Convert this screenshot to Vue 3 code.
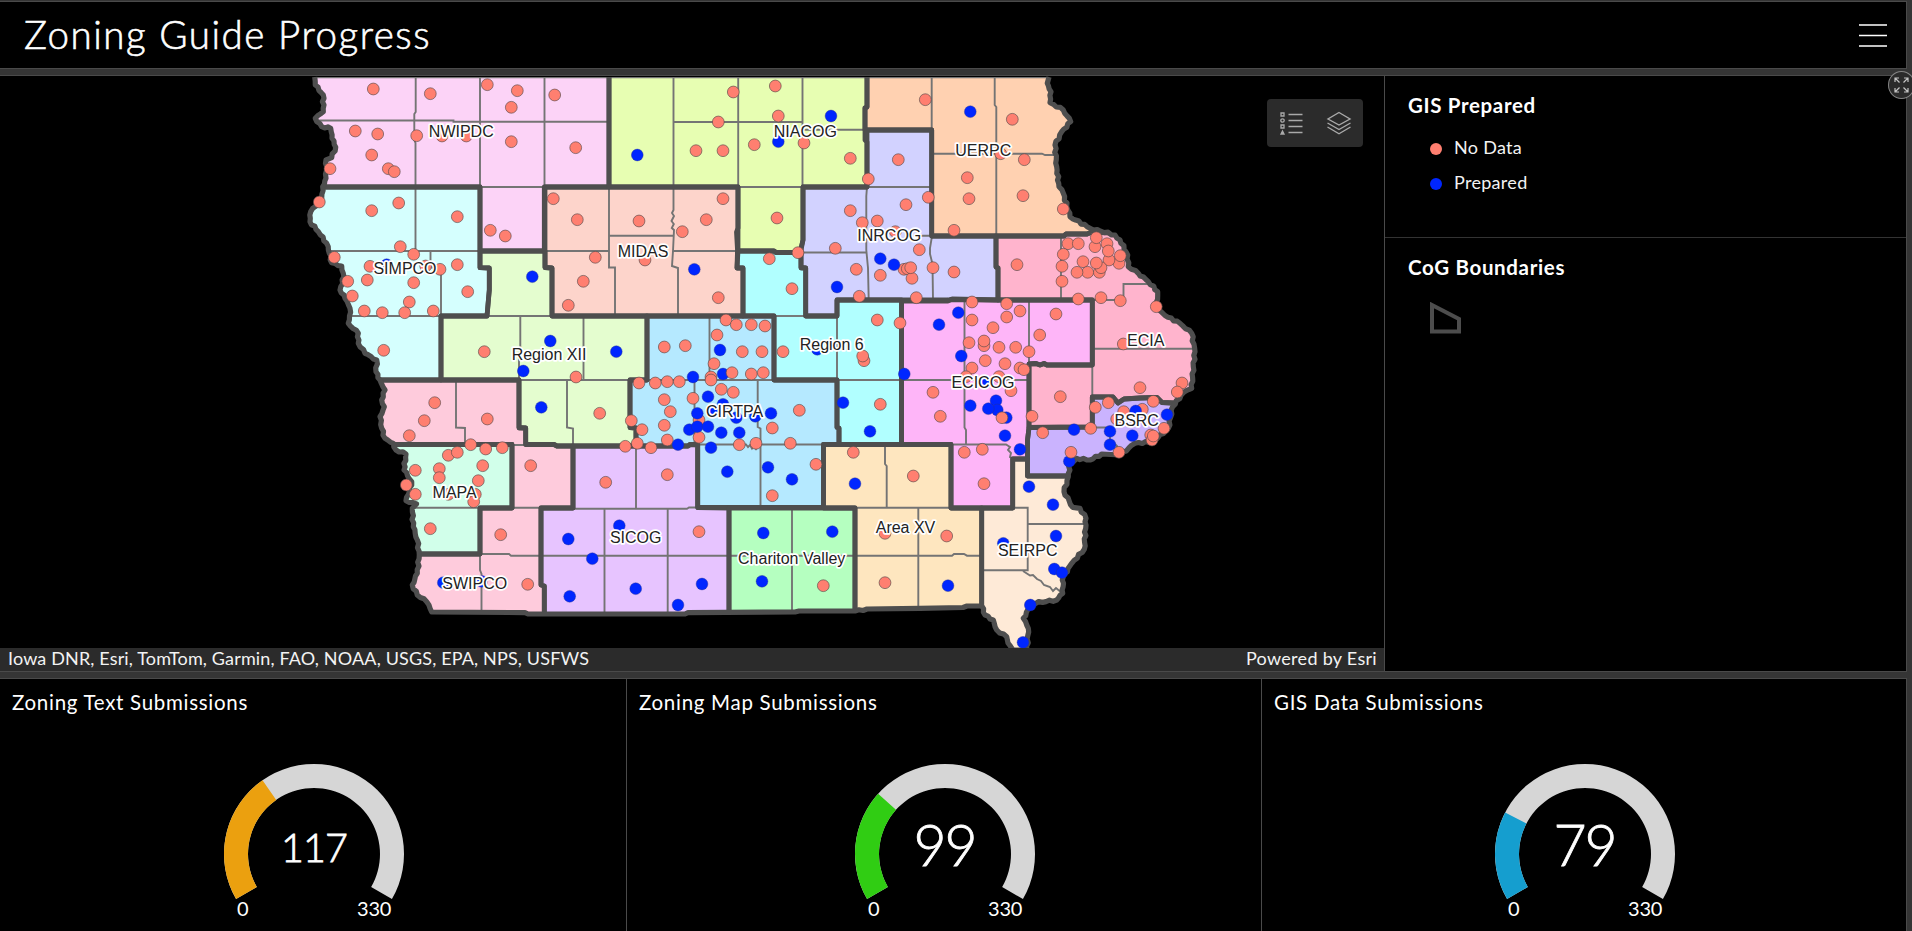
<script setup>
const outline = [
  [314.7,77],[315.3,85],[323.3,95],[323.3,111.7],[315.3,118.3],[321.7,126.7],[330.7,128.3],[332,138.3],[335.7,147.3],[331.7,157.7],[326,160],[326.7,170],[326,178.3],[322.7,186.7],[321.7,198],[318.3,203.3],[310.7,211.7],[310,221.7],[318.3,231.7],[326.7,243.3],[329.3,253.3],[331.7,262.7],[341.7,266],[344,276.7],[340,290],[345,298.3],[350,308.3],[349.5,316],
  [348.3,323.3],[358.3,333.3],[358.3,343.3],[365,353.3],[376.7,360],[376,371.7],[380,380],[385,390],[381.7,400],[384.3,406.7],[380,416.7],[381.7,428.3],[385,438.3],[393.3,443.3],[396,450],[406,454],[404,470],[411.7,481.7],[409.3,491.7],[406,500.7],[416.5,504],[412.3,508.3],[413.3,526.7],[417.3,540],[419.3,555],[417.3,573.3],[412.3,585],[417.3,595],[426.7,601.7],[431.7,612],
  [525,612.6],[528,614],[685,614],[688,612.6],[795,612],[799,611],[855,611],[867,609],[920,608.3],[963,607.5],[967,606],[981.7,606],
  [985,615],[993.3,620],[996.7,630],[1006.7,636.7],[1008,643],[1013,650],[1027,650],[1028.3,628.3],[1023.3,618.3],[1031.7,603.3],[1056.7,600],[1062.7,593.3],[1063.3,576.7],[1071.7,563.3],[1084.3,549.3],[1086,518.3],[1080,508.3],[1072.7,507.3],[1064,491.7],[1068.3,476.7],[1070,463.3],[1076.7,458.3],[1090,460],[1101.7,454],[1120,455],[1135,443.3],[1153,441.7],[1168.3,428.3],[1172.7,406.7],[1183.3,392.7],[1191.7,388.3],[1193.3,366.7],[1195,351.7],[1191.7,333.3],[1180,323.3],[1165,315.5],[1156.7,306.7],
  [1157.7,291.7],[1148.3,281.7],[1138.3,273.3],[1128.3,266.7],[1127.7,255],[1120,240],[1115,235],[1090,228.3],[1070,216.7],[1063.3,193.3],[1059,186.7],[1056.7,166.7],[1055,145],[1061.7,131.7],[1070.7,121.7],[1063.3,110],[1050,102.7],[1051,91.7],[1047.3,83.3],[1049,77]
]

// River banks are irregular: subdivide the non-straight sides with small offsets.
function shore(points) {
  const out = []
  points.forEach((p, i) => {
    out.push(p)
    const q = points[i + 1]
    if (!q) return
    const len = Math.hypot(q[0] - p[0], q[1] - p[1])
    if (len > 40 || len < 7 || Math.abs(q[1] - p[1]) < 1.6) return
    const steps = Math.round(len / 3.5)
    for (let s = 1; s < steps; s++) {
      const t = s / steps
      const off = Math.sin((i + 1) * 7.3 + s * 2.4) * 0.9
      const nx = -(q[1] - p[1]) / len
      const ny = (q[0] - p[0]) / len
      out.push([+(p[0] + (q[0] - p[0]) * t + nx * off).toFixed(1), +(p[1] + (q[1] - p[1]) * t + ny * off).toFixed(1)])
    }
  })
  return out
}
const statePts = shore(outline).map(p => p.join(',')).join(' ')

const regions = [
  ['#fcd3f7', '300,60 609,60 609,187 544.3,187 544.3,251 480,251 480,187 300,187'],
  ['#d5fffe', '300,187 480,187 480,267.7 489.3,268 489.3,290 487,316 441,316 441,380 300,380'],
  ['#e4fdcf', '480,251 545,251 545,267.5 552,268 552,316 647,316 647,380 630,380 630,427.5 636,428 636,446 557,446 554,444.5 525.7,444.5 525.7,428 519,427.5 519,380 441,380 441,316 487,316 489.3,290 489.3,268 480,267.7'],
  ['#fecbdc', '370,380 519,380 519,428 525.7,428 525.7,444.5 554,444.5 557,446 573,446 573,508 541,508 541,585 544.3,586 544.3,630 400,630 400,554 480,554 480,508 512,508 512,444.5 370,444.5'],
  ['#d1ffea', '392,444.5 512,444.5 512,508 480,508 480,554 400,554 395,500'],
  ['#e7c4ff', '573,446 636,446 688,446 690,444.5 697.7,444.5 697.7,507.5 729,508 729,630 544.3,630 544.3,586 541,585 541,508 573,508'],
  ['#fdd4cb', '545,187 738,187 738,228 736.5,232 737.5,250 737,268 743,268 743,316 552,316 552,268 545,267.5'],
  ['#e7feb2', '609,60 867,60 867,107 865,108 865,140 867,142 867,187 803,187 803,240 800.5,252.5 776,252.5 774,251 738,251 738,187 609,187'],
  ['#ffd1b1', '867,60 1200,60 1200,238 1092,232 1087,234 1066,234 1064,236 931.7,236 931.7,130 865,130 865,108 867,107'],
  ['#d2d2ff', '867,130 931.7,130 931.7,236 996,236 996,267 998,268 998,300 952,299 948,300 837,300 837,316 805.7,316 805.7,268 801,267.5 801,248 803,240 803,187 867,187'],
  ['#b1ffff', '738,251 774,251 776,252.5 801,252.5 801,268 805.7,268 805.7,316 837,316 837,300 901.5,300 901.5,444.5 839,444.5 839,428 837,427.5 837,380 774,380 774,316 743,316 743,268 737,268'],
  ['#b5e9ff', '647,316 774,316 774,380 837,380 837,427.5 839,428 839,444.5 823.5,444.5 823.5,507.5 697.7,507.5 697.7,445 690,444.5 688,446 636,446 636,428 630,427.5 630,380 647,380'],
  ['#fee6bf', '823.5,444.5 951,444.5 951,508 981.7,508 981.7,630 855,630 855,508 823.5,508'],
  ['#b5ffc0', '729,508 855,508 855,630 729,630'],
  ['#feb5f8', '901.5,301 948,301 952,299.5 998,300 1092.3,300 1092.3,365 1047,365 1044,363.5 1040,365 1036,363.5 1029,364 1029,428 1027.5,440 1027.5,459 1012.7,459 1012.7,508 951,508 951,444.5 901.5,444.5'],
  ['#ffb4cd', '996,236 1064,236 1066,234 1087,234 1092,232 1250,225 1250,405 1173,403 1162,402.5 1157,397.5 1140,398 1124,399 1118,403 1113,397 1092.3,397 1092.3,427 1029,427.5 1029,364 1036,363.5 1040,365 1044,363.5 1047,365 1092.3,365 1092.3,300 998,300 998,268 996,267'],
  ['#cab3fe', '1092.3,397 1113,397 1118,403 1124,399 1140,398 1157,397.5 1162,402.5 1173,403 1190,404 1190,465 1110,480 1068,476 1027.5,476 1027.5,440 1029,427.5 1092.3,427'],
  ['#feead7', '1012.7,459 1027.5,459 1027.5,476 1120,476 1120,670 981.7,670 981.7,508 1012.7,508']
]

const counties = [
  'M415.7 77V112L414.3 114V140L415.5 143V251', 'M315 120.5H453.5V121.8H609', 'M480 77V187H544.5V77', 'M315 77.3H1049',
  'M329 251H480', 'M430.5 251V267.5H441V316H350', 'M609 187V267.5H615V316', 'M609 235.7H673', 'M544 251H609M673 251H738',
  'M673.5 77V210L672 213L674 216L671.5 221L673.8 224L671.8 228L674 230L673 251L672 266L678 268V316',
  'M738.2 77V187H803M802.5 77V187', 'M673.5 122H802.5M802.5 129.7H865', 'M867 187H932',
  'M867 187L866.3 196V250L868 268L868.7 300', 'M803 252.5H866M914 235.7H932', 'M932 236L930 248V254L932.5 264L933 300',
  'M931.7 77V130', 'M994.7 77V105L996.3 107V236', 'M932 153.7H1042L1045 155H1055', 'M1061 236V300', 'M1092 300H1123.5V284H1150',
  'M1093 348.7H1193', 'M1092.3 364V397', 'M964.5 300V427.5L966 430V444.5', 'M1029 300V364', 'M901 380H1028',
  'M951 444.5H1006L1010 447L1008 450L1011 453L1010 457L1013 459', 'M1092 427.5H1110V440L1117 446V455',
  'M1013 507.7H1027.7V570.3H982', 'M1028 524H1085', 'M1023 571L1030 575.5L1033 575L1037 579L1041 581L1044 585L1050 587L1053 591L1056 588L1062 593',
  'M855 507.7H982', 'M918.3 508V608', 'M885 445V464L886.7 466V508', 'M855 555.7H952L954 554H964L967 555.7H982', 'M792 508V613M729 555.7H855',
  'M709.5 316V380', 'M647 380H774', 'M694.5 380V445', 'M757.7 380V427L760.5 428.5V508', 'M698 444.5H746L748 447L750 445L752 448.5L754 446L756 449L758 446L761 444.5H823',
  'M837 316V380H901', 'M774 316H806', 'M545 508.7H687L689 507.5H698', 'M636 446V509', 'M604.5 509V613M667.7 509V613', 'M541 555.7H729',
  'M456 380V427.5L465 428V444.5', 'M512 445H573', 'M512 507.7H541M415 507.7H480', 'M480 554H509L511 555.7H541', 'M480 554V570L481.5 574V612',
  'M520.3 316V350L519 355V380H630', 'M583.5 316V380', 'M567 380V427.5L573 428.5V445', 'M489 316H552'
]

// Point batches: an origin followed by offsets stored at triple resolution.
const place = (ox, oy, s) => s.trim().split(/\s+/).map(p => {
  const [x, y] = p.split(',').map(Number)
  return [+(ox + x / 3).toFixed(1), +(oy + y / 3).toFixed(1)]
})
const noData = [
  ...place(290, 60, '250,87 421,101 592,74 682,92 664,142 794,105 196,213 263,222 380,227 456,228 529,228 664,245 857,263 245,285 295,326 313,335 120,326 88,426 245,452 326,429 502,470 601,511 646,528 790,416 862,479 331,560 371,583 133,592 240,619 407,618 450,628 502,614 173,664 232,660 371,668 187,708 533,695 223,753 277,758 358,726 344,758 430,753 916,592 880,664 835,736'),
  ...place(600, 60, '400,96 526,78 355,186 535,168 288,272 369,272 463,254 612,249 751,295 805,357 895,299 976,119 369,416 117,483 319,479 247,515 531,474 751,452 787,488 832,483 886,515 918,434 985,412 135,600 508,596 594,578 706,565 355,713 576,686 769,628 778,709 841,646 912,628 922,626 936,655 932,623 949,713 958,569 999,623'),
  ...place(860, 60, '457,178 422,281 493,299 322,353 327,416 489,407 610,447 282,511 282,636 471,614 624,551 655,551 741,551 705,560 709,533 777,610 747,600 745,573 781,587 610,583 606,619 669,605 718,637 723,623 709,609 683,637 651,637 606,664 655,717 723,713 781,722 889,740 336,726 440,731 480,753 588,762'),
  ...place(330, 300, '161,151 463,155 738,231 314,308 283,362 238,407 472,357 809,340 422,434 355,466 382,457 467,447 517,443 256,511 328,506 328,533 458,497 445,542 229,555 256,583 355,583 436,583 431,605 602,497 827,547 301,686 512,704 593,853'),
  ...place(600, 300, '378,60 409,74 454,74 495,78 351,105 193,141 256,137 427,155 486,155 549,155 342,191 333,231 333,240 454,222 490,218 117,249 166,249 202,245 238,245 364,268 400,277 193,299 279,295 211,335 94,362 193,376 126,389 297,360 297,412 202,420 112,430 76,439 153,443 418,434 468,430 517,384 598,331 571,430 202,524 648,493 517,587 760,457 940,528 297,695 855,848 670,857 855,700 832,60 792,182 788,168 841,313 900,69'),
  ...place(890, 300, '246,60 350,51 309,83 237,128 282,137 282,123 327,142 377,142 417,155 449,105 286,182 345,191 246,204 390,204 402,209 228,230 327,230 363,272 129,277 151,349 426,349 223,457 277,448 282,551 511,290 700,132 750,263 876,249 862,276 616,322 655,308 790,304 701,335 757,328 680,357 602,385 458,398 822,385 782,405 786,420 790,408 687,457 170,708')
]
const prepared = [
  ...place(290, 60, '290,614 727,650'),
  ...place(600, 60, '112,285 693,168 535,245 283,628 841,596 882,614 711,681'),
  ...place(860, 60, '331,155 295,758'),
  ...place(330, 300, '661,123 859,155 580,213 634,322 715,717 787,776 868,677 719,889 917,866 340,848 455,844'),
  ...place(600, 300, '360,150 279,231 369,222 324,290 369,313 338,333 292,340 409,353 466,349 513,340 268,389 292,380 324,380 364,398 418,398 333,443 234,434 382,515 504,502 576,538 652,148 729,308 810,394 913,222 765,551 490,699 697,695 486,844 306,852 234,915'),
  ...place(890, 300, '147,74 214,168 241,317 318,302 322,330 295,326 349,353 345,407 390,448 285,247 552,389 660,394 660,434 727,407 737,333 831,344 538,484 417,560 489,614 498,708 340,730 493,807 516,818 421,915 399,1027 174,857')
]
const noDataTop = [...place(890, 300, '336,353 543,457'), ...place(600, 300, '396,218')]

const labels = [
  ['NWIPDC',461.3,137.3],['SIMPCO',405,274],['NIACOG',805.3,137],['UERPC',983.3,156],['INRCOG',889.3,241],['MIDAS',643,256.5],
  ['Region XII',549,360.3],['CIRTPA',734.5,417],['Region 6',831.7,350],['ECIA',1145.7,345.7],['ECICOG',983,388.3],['BSRC',1136.7,425.7],
  ['MAPA',454.7,498.3],['SWIPCO',474.7,589],['SICOG',635.7,542.7],['Chariton Valley',791.7,564],['Area XV',905.5,532.7],['SEIRPC',1027.7,556.3]
]

const max = 330
function arc(from, to) {
  const pt = (r, f) => {
    const a = ((150 + 240 * f) * Math.PI) / 180
    return `${(100 + r * Math.cos(a)).toFixed(2)} ${(95 + r * Math.sin(a)).toFixed(2)}`
  }
  const big = (to - from) * 240 > 180 ? 1 : 0
  return `M${pt(90, from)}A90 90 0 ${big} 1 ${pt(90, to)}L${pt(66, to)}A66 66 0 ${big} 0 ${pt(66, from)}Z`
}
const gauges = [
  { title: 'Zoning Text Submissions', value: 117, color: '#eba00f', size: 39.5, base: 103.2, width: 67 },
  { title: 'Zoning Map Submissions', value: 99, color: '#30cd13', size: 57, base: 107.2, width: 64 },
  { title: 'GIS Data Submissions', value: 79, color: '#159ecf', size: 57, base: 107.2, width: 64 }
]
</script>

<template>
  <div class="dashboard">
    <header class="header">
      <h1>Zoning Guide Progress</h1>
      <svg class="menu" width="28" height="24" viewBox="0 0 28 24"><path d="M0 2H28M0 12.5H28M0 23H28" stroke="#fff" stroke-width="1.6" /></svg>
    </header>

    <main class="main">
      <section class="map">
        <svg class="canvas" width="1384" height="572" viewBox="0 76 1384 572">
          <clipPath id="state"><polygon :points="statePts" /></clipPath>
          <g clip-path="url(#state)">
            <polygon v-for="(r, i) in regions" :key="i" :points="r[1]" :fill="r[0]" />
            <path v-for="(d, i) in counties" :key="'c' + i" :d="d" class="county" />
            <polygon v-for="(r, i) in regions" :key="'b' + i" :points="r[1]" class="border" />
          </g>
          <polyline :points="statePts" class="state-line" />
          <g class="no-data">
            <circle v-for="(p, i) in noData" :key="i" :cx="p[0]" :cy="p[1]" r="5.9" />
          </g>
          <g class="prepared">
            <circle v-for="(p, i) in prepared" :key="i" :cx="p[0]" :cy="p[1]" r="5.9" />
          </g>
          <g class="no-data">
            <circle v-for="(p, i) in noDataTop" :key="i" :cx="p[0]" :cy="p[1]" r="5.9" />
          </g>
          <text v-for="l in labels" :key="l[0]" :x="l[1]" :y="l[2]" class="label">{{ l[0] }}</text>
        </svg>
        <div class="tools">
          <svg width="24" height="24" viewBox="0 0 24 24" fill="none" stroke="#a9a9a9" stroke-width="1.3">
            <path d="M9.5 3.5H23.5M9.5 9.5H23.5M9.5 15.5H23.5M9.5 21.5H23.5" />
            <path d="M2 2H5V5H2ZM2 14H5V17H2Z" /><circle cx="3.5" cy="9.5" r="1.7" /><path d="M3.5 20L5 23H2Z" fill="#a9a9a9" />
          </svg>
          <svg width="26" height="24" viewBox="0 0 26 24" fill="none" stroke="#a9a9a9" stroke-width="1.4">
            <path d="M13 1.5L24 8L13 14L2 8ZM1.5 12L13 18.5L24.5 12M1.5 16L13 22.8L24.5 16" />
          </svg>
        </div>
        <footer class="attribution"><span class="sources">Iowa DNR, Esri, TomTom, Garmin, FAO, NOAA, USGS, EPA, NPS, USFWS</span><span class="powered">Powered by Esri</span></footer>
      </section>

      <aside class="legend">
        <section class="group">
          <h2>GIS Prepared</h2>
          <div class="entry"><i class="dot salmon"></i><span>No Data</span></div>
          <div class="entry"><i class="dot blue"></i><span>Prepared</span></div>
        </section>
        <section class="group">
          <h2>CoG Boundaries</h2>
          <svg class="swatch" width="32" height="32" viewBox="0 0 32 32"><path d="M2 3L29 17V29.5H2Z" fill="none" stroke="#4d4d4d" stroke-width="4" /></svg>
        </section>
        <button class="expand" aria-label="Expand">
          <svg width="15" height="16" viewBox="0 0 15 16" fill="none" stroke="#c4c4c4" stroke-width="1.2">
            <path d="M1 5V1H5M1 1L5.5 5.5M10 1H14V5M14 1L9.5 5.5M1 11V15H5M1 15L5.5 10.5M14 11V15H10M14 15L9.5 10.5" />
          </svg>
        </button>
      </aside>
    </main>

    <section class="gauges">
      <article v-for="g in gauges" :key="g.title" class="gauge">
        <h3>{{ g.title }}</h3>
        <svg width="200" height="170" viewBox="0 0 200 170">
          <path :d="arc(0, 1)" fill="#d6d6d6" />
          <path :d="arc(0, g.value / max)" :fill="g.color" />
          <text x="100.5" :y="g.base" :font-size="g.size" :textLength="g.width" class="value">{{ g.value }}</text>
          <text x="23" y="157" class="tick">0</text>
          <text x="177" y="157" class="tick end">{{ max }}</text>
        </svg>
      </article>
    </section>
  </div>
</template>

<style>
body { background: #333; }
</style>

<style scoped>
.dashboard {
  box-sizing: border-box;
  width: 1912px;
  height: 931px;
  padding: 1px 5px 0 0;
  display: flex;
  flex-direction: column;
  background: #353535;
  color: #fff;
  font-family: Lato, "Open Sans", sans-serif;
  overflow: hidden;
}
h1, h2, h3 { margin: 0; font-weight: 400; }
.header {
  box-sizing: border-box;
  height: 68px;
  flex: none;
  display: flex;
  align-items: center;
  justify-content: space-between;
  padding: 0 19px 0 24px;
  background: #000;
  border: 1px solid #4a4a4a;
  border-left: 0;
}
h1 { font-size: 38.5px; font-weight: 300; line-height: 60px; letter-spacing: 1.55px; padding-bottom: 3px; -webkit-text-stroke: 0.6px #fff; }
.main {
  box-sizing: border-box;
  height: 597px;
  flex: none;
  margin-top: 6px;
  display: flex;
  border: 1px solid #4a4a4a;
  border-left: 0;
  background: #000;
}
.map { position: relative; width: 1384px; display: flex; flex-direction: column; border-right: 1px solid #4a4a4a; flex: none; }
.canvas { display: block; flex: none; }
.county { fill: none; stroke: #747474; stroke-width: 1.9; }
.border { fill: none; stroke: #4e4e4e; stroke-width: 4.8; stroke-linejoin: round; }
.state-line { fill: none; stroke: #4e4e4e; stroke-width: 5.2; stroke-linejoin: round; }
.no-data circle { fill: #ff7f70; stroke: rgba(90, 75, 75, 0.65); stroke-width: 1; }
.prepared circle { fill: #0026ff; stroke: rgba(40, 50, 140, 0.5); stroke-width: 0.8; }
.label {
  font: 16px "Liberation Sans", Arial, sans-serif;
  text-anchor: middle;
  fill: #222;
  stroke: #fff;
  stroke-width: 3.4px;
  stroke-linejoin: round;
  paint-order: stroke;
}
.tools {
  position: absolute;
  top: 23px;
  left: 1267px;
  box-sizing: border-box;
  width: 96px;
  height: 48px;
  padding: 0 11px 0 12px;
  display: flex;
  align-items: center;
  justify-content: space-between;
  border-radius: 4px;
  background: #2b2b2b;
}
.attribution {
  flex: 1;
  display: flex;
  justify-content: space-between;
  padding: 0 7px 0 8px;
  background: #2b2b2b;
  color: #f3f3f3;
  font-size: 18px;
  line-height: 21px;
}
.sources { letter-spacing: 0.15px; }
.powered { letter-spacing: 0.3px; }
.legend { position: relative; flex: 1; }
.group { box-sizing: border-box; padding: 17px 22px 0 23px; }
.group:first-child { height: 162px; border-bottom: 1px solid #333; }
h2 { font-size: 20.5px; font-weight: 700; line-height: 24px; letter-spacing: 0.65px; }
.entry { display: flex; align-items: center; gap: 12px; height: 34.5px; padding-left: 22px; font-size: 18px; letter-spacing: 0.3px; color: #f3f3f3; }
h2 + .entry { margin-top: 15px; }
.entry span { padding-bottom: 4px; }
.dot { width: 12px; height: 12px; border-radius: 50%; }
.salmon { background: #ff7f70; }
.blue { background: #0026ff; }
.swatch { display: block; margin: 23px 0 0 22px; }
.expand {
  position: absolute;
  top: -5px;
  right: -9px;
  box-sizing: border-box;
  width: 27px;
  height: 28px;
  padding: 0;
  display: flex;
  align-items: center;
  justify-content: center;
  border: 1px solid #858585;
  border-radius: 50%;
  background: #2b2b2b;
}
.gauges {
  flex: 1;
  margin-top: 6px;
  display: grid;
  grid-template-columns: 627px 635px 1fr;
  border-top: 1px solid #4a4a4a;
  border-right: 1px solid #4a4a4a;
  background: #000;
}
.gauge { display: flex; flex-direction: column; align-items: center; border-right: 1px solid #4a4a4a; }
.gauge:last-child { border-right: 0; }
h3 { align-self: stretch; padding: 11px 12px 0; font-size: 20.5px; line-height: 24px; letter-spacing: 0.7px; }
.gauge svg { margin: 45px 0 0 1px; }
.value { text-anchor: middle; fill: #fff; font-weight: 300; stroke: #fff; stroke-width: 0.8px; }
.tick { fill: #fff; font-size: 20px; letter-spacing: -0.3px; }
.end { text-anchor: end; }
</style>
